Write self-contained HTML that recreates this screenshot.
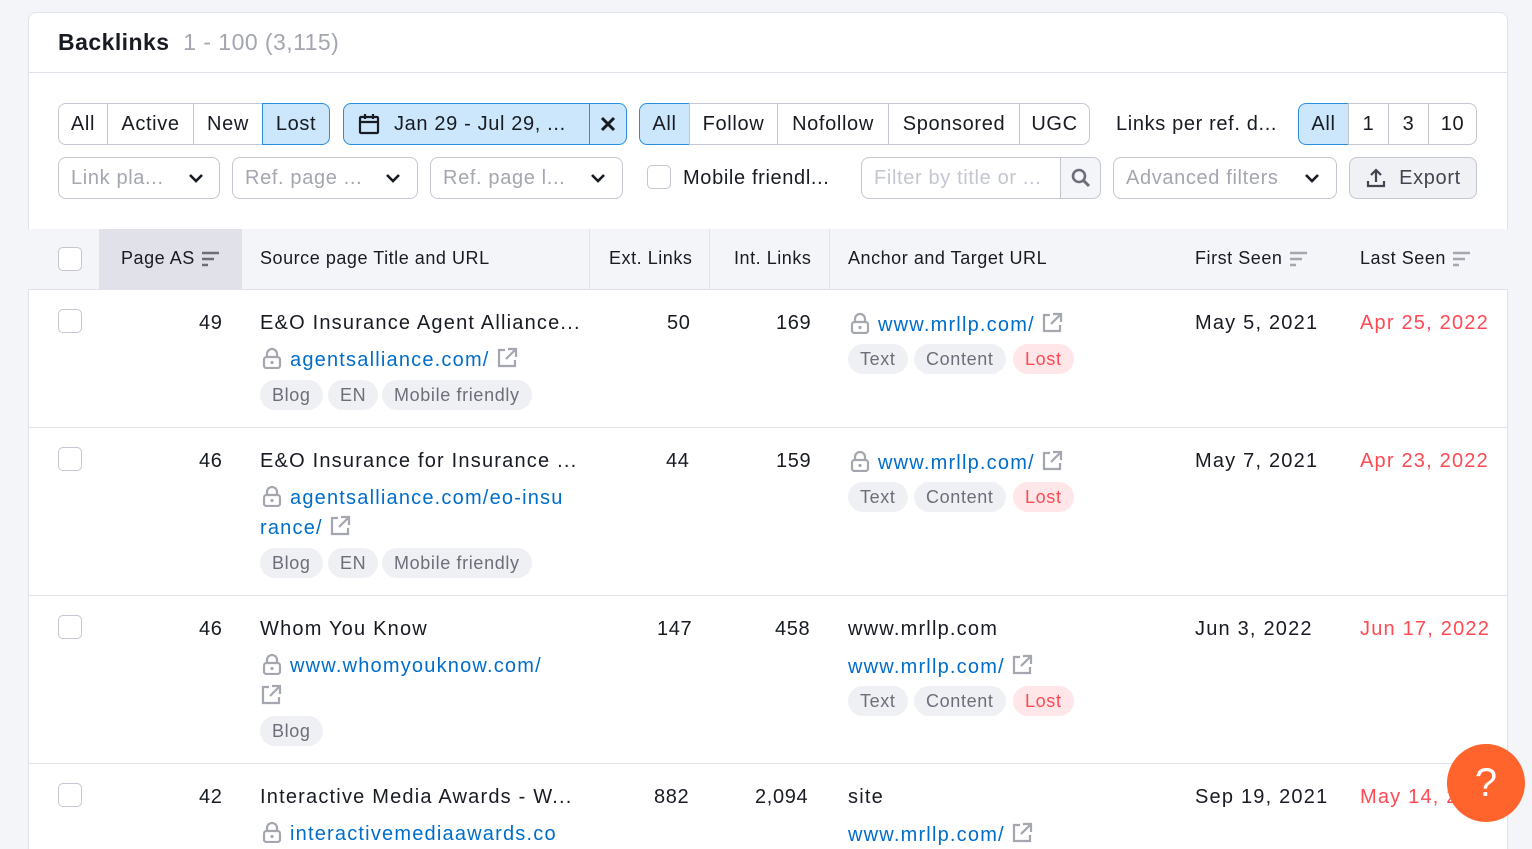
<!DOCTYPE html>
<html style="width:1532px;height:849px;overflow:hidden"><head><meta charset="utf-8"><style>
*{box-sizing:border-box;margin:0;padding:0}
body{width:1532px;height:849px;overflow:hidden;background:#f4f5f9;font-family:"Liberation Sans",Arial,sans-serif;color:#191b23;position:relative;letter-spacing:0.04em}
.card{position:absolute;left:28px;top:12px;width:1480px;height:850px;background:#fff;border:1px solid #e0e1e9;border-radius:8px;overflow:hidden}
.a{position:absolute;white-space:nowrap}
.b{position:absolute;height:42px;border:1px solid #c4c7cf;display:flex;align-items:center;justify-content:center;font-size:20px;color:#191b23;background:#fff}
.sel{background:#cce7fb;border-color:#2b8fe0}
.ph{color:#a4a6b0;justify-content:flex-start;padding-left:12px}
.t20{font-size:20px}
.r{letter-spacing:0.06em}
.lnk{color:#006dca}
.tag{position:absolute;height:30px;border-radius:15px;background:#eff0f4;color:#6c6e79;font-size:18px;padding:0 12px;line-height:30px}
.lost{background:#ffe6e8;color:#ff4953}
.cb{position:absolute;width:24px;height:24px;border:1px solid #c4c7cf;border-radius:5px;background:#fff}
.hd{font-size:18px;position:absolute;top:248px;letter-spacing:0.03em}
.red{color:#ff4953}
.hr{position:absolute;left:28px;width:1480px;height:1px;background:#e0e1e9}
.lk{display:inline-block;width:20px;height:22px;vertical-align:-3px;margin-right:8px}
.ex{display:inline-block;width:22px;height:22px;vertical-align:-3px;margin-left:6px}
</style></head><body>
<svg width="0" height="0" style="position:absolute">
<defs>
<symbol id="lock" viewBox="0 0 20 22"><path d="M5 10V7a5 5 0 0 1 10 0v3" fill="none" stroke="#a4a6b0" stroke-width="2.2"/><rect x="2" y="10" width="16" height="11" rx="2.5" fill="none" stroke="#a4a6b0" stroke-width="2.2"/><circle cx="10" cy="15.5" r="1.6" fill="#a4a6b0"/></symbol>
<symbol id="ext" viewBox="0 0 22 22"><path d="M9 3H3V19H19V13" fill="none" stroke="#a4a6b0" stroke-width="2.2"/><path d="M12 2H20V10M20 2L10 12" fill="none" stroke="#a4a6b0" stroke-width="2.2"/></symbol>
</defs></svg>
<div class="card"></div>
<div class="a" style="left:58px;top:29px;font-size:23px;font-weight:bold;letter-spacing:0.02em">Backlinks <span style="font-weight:normal;color:#a4a6b0;font-size:23px">&nbsp;1 - 100 (3,115)</span></div>
<div class="hr" style="top:72px"></div>

<div class="b" style="left:58px;top:103px;width:50px;border-radius:8px 0 0 8px">All</div>
<div class="b" style="left:107px;top:103px;width:87px">Active</div>
<div class="b" style="left:193px;top:103px;width:70px">New</div>
<div class="b sel" style="left:262px;top:103px;width:68px;border-radius:0 8px 8px 0">Lost</div>
<div class="b sel" style="left:343px;top:103px;width:247px;border-radius:8px 0 0 8px;justify-content:flex-start;padding-left:14px">
<svg width="22" height="22" viewBox="0 0 22 22" style="margin-right:14px"><rect x="2" y="4" width="18" height="16" rx="1" fill="none" stroke="#191b23" stroke-width="2.2"/><line x1="2" y1="9" x2="20" y2="9" stroke="#191b23" stroke-width="2.2"/><line x1="7" y1="1" x2="7" y2="6" stroke="#191b23" stroke-width="2.2"/><line x1="15" y1="1" x2="15" y2="6" stroke="#191b23" stroke-width="2.2"/></svg>Jan 29 - Jul 29, ...</div>
<div class="b sel" style="left:589px;top:103px;width:38px;border-radius:0 8px 8px 0"><svg width="16" height="16"><path d="M2 2L14 14M14 2L2 14" stroke="#191b23" stroke-width="3"/></svg></div>
<div class="b sel" style="left:639px;top:103px;width:51px;border-radius:8px 0 0 8px">All</div>
<div class="b" style="left:689px;top:103px;width:89px">Follow</div>
<div class="b" style="left:777px;top:103px;width:112px">Nofollow</div>
<div class="b" style="left:888px;top:103px;width:132px">Sponsored</div>
<div class="b" style="left:1019px;top:103px;width:71px;border-radius:0 8px 8px 0">UGC</div>
<div class="a t20" style="left:1116px;top:113px">Links per ref. d...</div>
<div class="b sel" style="left:1298px;top:103px;width:51px;border-radius:8px 0 0 8px">All</div>
<div class="b" style="left:1348px;top:103px;width:41px">1</div>
<div class="b" style="left:1388px;top:103px;width:41px">3</div>
<div class="b" style="left:1428px;top:103px;width:49px;border-radius:0 8px 8px 0">10</div>

<div class="b ph" style="left:58px;top:157px;width:162px;border-radius:8px">Link pla...</div>
<div class="b ph" style="left:232px;top:157px;width:186px;border-radius:8px">Ref. page ...</div>
<div class="b ph" style="left:430px;top:157px;width:193px;border-radius:8px">Ref. page l...</div>
<svg class="a" style="left:187px;top:172px" width="18" height="12"><path d="M3 3L9 9L15 3" fill="none" stroke="#191b23" stroke-width="2.6"/></svg>
<svg class="a" style="left:384px;top:172px" width="18" height="12"><path d="M3 3L9 9L15 3" fill="none" stroke="#191b23" stroke-width="2.6"/></svg>
<svg class="a" style="left:589px;top:172px" width="18" height="12"><path d="M3 3L9 9L15 3" fill="none" stroke="#191b23" stroke-width="2.6"/></svg>
<div class="cb" style="left:647px;top:165px"></div>
<div class="a t20" style="left:683px;top:167px">Mobile friendl...</div>
<div class="b ph" style="left:861px;top:157px;width:200px;border-radius:8px 0 0 8px;color:#c4c7cf">Filter by title or ...</div>
<div class="b" style="left:1060px;top:157px;width:41px;border-radius:0 8px 8px 0;background:#f4f5f9"><svg width="22" height="22"><circle cx="9" cy="9" r="6" fill="none" stroke="#6c6e79" stroke-width="2.6"/><path d="M13 13L19 19" stroke="#6c6e79" stroke-width="3"/></svg></div>
<div class="b ph" style="left:1113px;top:157px;width:224px;border-radius:8px">Advanced filters</div>
<svg class="a" style="left:1303px;top:172px" width="18" height="12"><path d="M3 3L9 9L15 3" fill="none" stroke="#191b23" stroke-width="2.6"/></svg>
<div class="b" style="left:1349px;top:157px;width:128px;border-radius:8px;background:#f0f1f5;color:#42444e"><svg width="22" height="22" style="margin-right:12px"><path d="M11 15V3M6 8L11 3L16 8M3 14V19H19V14" fill="none" stroke="#42444e" stroke-width="2.2"/></svg>Export</div>

<div class="a" style="left:28px;top:229px;width:1480px;height:60px;background:#f4f5f9"></div>
<div class="a" style="left:99px;top:229px;width:143px;height:60px;background:#e0e1e9"></div>
<div class="a" style="left:589px;top:229px;width:1px;height:60px;background:#e0e1e9"></div>
<div class="a" style="left:709px;top:229px;width:1px;height:60px;background:#e0e1e9"></div>
<div class="a" style="left:829px;top:229px;width:1px;height:60px;background:#e0e1e9"></div>
<div class="hr" style="top:289px"></div>
<div class="cb" style="left:58px;top:247px"></div>
<div class="hd a" style="left:121px">Page AS</div>
<div class="hd a" style="left:260px">Source page Title and URL</div>
<div class="hd a" style="left:609px">Ext. Links</div>
<div class="hd a" style="left:734px">Int. Links</div>
<div class="hd a" style="left:848px">Anchor and Target URL</div>
<div class="hd a" style="left:1195px">First Seen</div>
<div class="hd a" style="left:1360px">Last Seen</div>
<svg class="a" style="left:201px;top:250px" width="20" height="18"><path d="M1 3H18M1 9H13M1 15H7" stroke="#6c6e79" stroke-width="2.6"/></svg>
<svg class="a" style="left:1289px;top:250px" width="20" height="18"><path d="M1 3H18M1 9H13M1 15H7" stroke="#a4a6b0" stroke-width="2.6"/></svg>
<svg class="a" style="left:1452px;top:250px" width="20" height="18"><path d="M1 3H18M1 9H13M1 15H7" stroke="#a4a6b0" stroke-width="2.6"/></svg>

<div class="hr" style="top:427px"></div>
<div class="hr" style="top:595px"></div>
<div class="hr" style="top:763px"></div>

<!-- row1 -->
<div class="cb" style="left:58px;top:309px"></div>
<div class="a t20" style="left:199px;top:312px">49</div>
<div class="a t20 r" style="left:260px;top:312px">E&amp;O Insurance Agent Alliance...</div>
<div class="a t20 r lnk" style="left:262px;top:347px"><svg class="lk"><use href="#lock"/></svg>agentsalliance.com/<svg class="ex"><use href="#ext"/></svg></div>
<div class="tag" style="left:260px;top:380px">Blog</div>
<div class="tag" style="left:328px;top:380px">EN</div>
<div class="tag" style="left:382px;top:380px">Mobile friendly</div>
<div class="a t20" style="left:667px;top:312px">50</div>
<div class="a t20" style="left:776px;top:312px">169</div>
<div class="a t20 r lnk" style="left:850px;top:312px"><svg class="lk"><use href="#lock"/></svg>www.mrllp.com/<svg class="ex"><use href="#ext"/></svg></div>
<div class="tag" style="left:848px;top:344px">Text</div>
<div class="tag" style="left:914px;top:344px">Content</div>
<div class="tag lost" style="left:1013px;top:344px">Lost</div>
<div class="a t20 r" style="left:1195px;top:312px">May 5, 2021</div>
<div class="a t20 r red" style="left:1360px;top:312px">Apr 25, 2022</div>

<!-- row2 -->
<div class="cb" style="left:58px;top:447px"></div>
<div class="a t20" style="left:199px;top:450px">46</div>
<div class="a t20 r" style="left:260px;top:450px">E&amp;O Insurance for Insurance ...</div>
<div class="a t20 r lnk" style="left:262px;top:485px"><svg class="lk"><use href="#lock"/></svg>agentsalliance.com/eo-insu</div>
<div class="a t20 r lnk" style="left:260px;top:515px">rance/<svg class="ex"><use href="#ext"/></svg></div>
<div class="tag" style="left:260px;top:548px">Blog</div>
<div class="tag" style="left:328px;top:548px">EN</div>
<div class="tag" style="left:382px;top:548px">Mobile friendly</div>
<div class="a t20" style="left:666px;top:450px">44</div>
<div class="a t20" style="left:776px;top:450px">159</div>
<div class="a t20 r lnk" style="left:850px;top:450px"><svg class="lk"><use href="#lock"/></svg>www.mrllp.com/<svg class="ex"><use href="#ext"/></svg></div>
<div class="tag" style="left:848px;top:482px">Text</div>
<div class="tag" style="left:914px;top:482px">Content</div>
<div class="tag lost" style="left:1013px;top:482px">Lost</div>
<div class="a t20 r" style="left:1195px;top:450px">May 7, 2021</div>
<div class="a t20 r red" style="left:1360px;top:450px">Apr 23, 2022</div>

<!-- row3 -->
<div class="cb" style="left:58px;top:615px"></div>
<div class="a t20" style="left:199px;top:618px">46</div>
<div class="a t20 r" style="left:260px;top:618px">Whom You Know</div>
<div class="a t20 r lnk" style="left:262px;top:653px"><svg class="lk"><use href="#lock"/></svg>www.whomyouknow.com/</div>
<div class="a" style="left:260px;top:684px"><svg class="ex" style="margin:0"><use href="#ext"/></svg></div>
<div class="tag" style="left:260px;top:716px">Blog</div>
<div class="a t20" style="left:657px;top:618px">147</div>
<div class="a t20" style="left:775px;top:618px">458</div>
<div class="a t20 r" style="left:848px;top:618px">www.mrllp.com</div>
<div class="a t20 r lnk" style="left:848px;top:654px">www.mrllp.com/<svg class="ex"><use href="#ext"/></svg></div>
<div class="tag" style="left:848px;top:686px">Text</div>
<div class="tag" style="left:914px;top:686px">Content</div>
<div class="tag lost" style="left:1013px;top:686px">Lost</div>
<div class="a t20 r" style="left:1195px;top:618px">Jun 3, 2022</div>
<div class="a t20 r red" style="left:1360px;top:618px">Jun 17, 2022</div>

<!-- row4 -->
<div class="cb" style="left:58px;top:783px"></div>
<div class="a t20" style="left:199px;top:786px">42</div>
<div class="a t20 r" style="left:260px;top:786px">Interactive Media Awards - W...</div>
<div class="a t20 r lnk" style="left:262px;top:821px"><svg class="lk"><use href="#lock"/></svg>interactivemediaawards.co</div>
<div class="a t20" style="left:654px;top:786px">882</div>
<div class="a t20" style="left:755px;top:786px">2,094</div>
<div class="a t20 r" style="left:848px;top:786px">site</div>
<div class="a t20 r lnk" style="left:848px;top:822px">www.mrllp.com/<svg class="ex"><use href="#ext"/></svg></div>
<div class="a t20 r" style="left:1195px;top:786px">Sep 19, 2021</div>
<div class="a t20 r red" style="left:1360px;top:786px">May 14, 2022</div>

<div class="a" style="left:1447px;top:744px;width:78px;height:78px;border-radius:50%;background:#ff642d;color:#fff;font-size:40px;text-align:center;line-height:78px;letter-spacing:0">?</div>
</body></html>
